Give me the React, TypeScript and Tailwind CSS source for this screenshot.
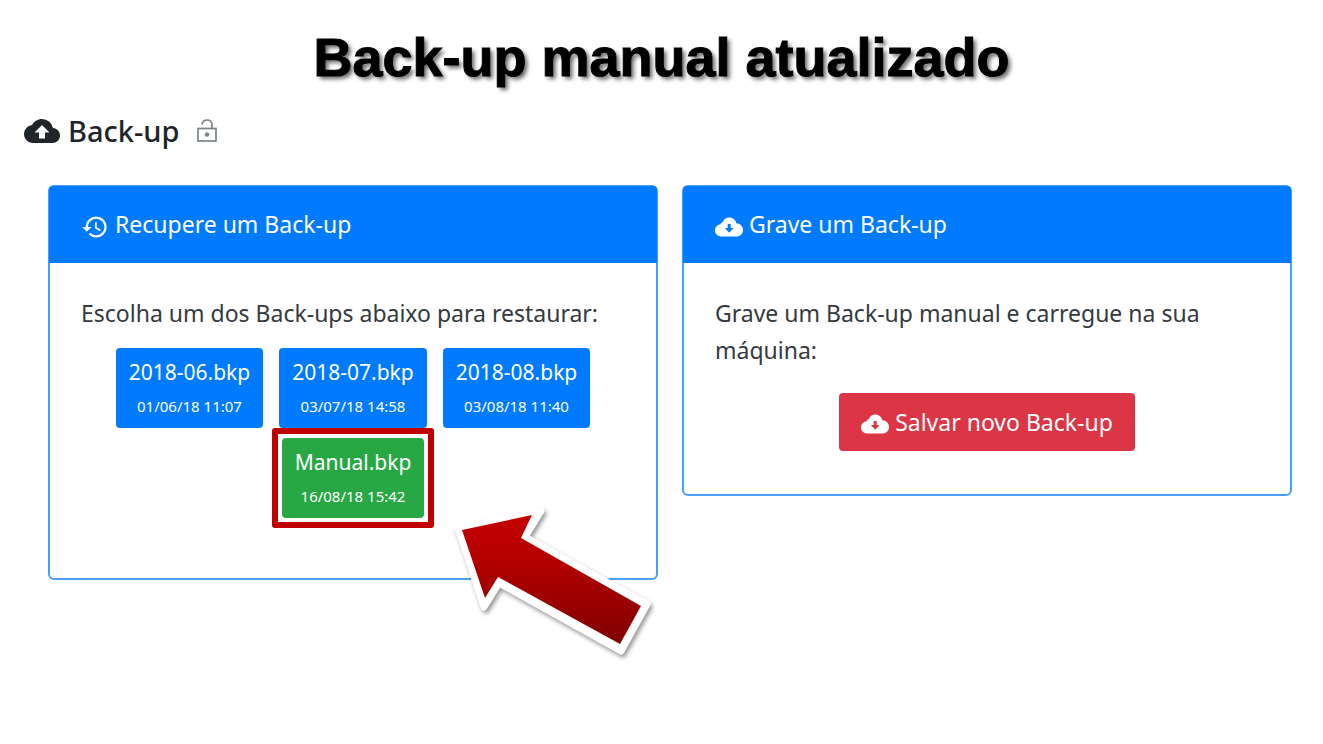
import { MdCloudUpload, MdHistory } from "react-icons/md";

function CloudDownload() {
  return (
    <svg viewBox="0 0 28 20" className="mt-1 h-5 w-7 shrink-0" fill="currentColor" fillRule="evenodd" aria-hidden="true">
      <path d="M8 5C8.600 2 11.200.500 14.300.500c3.700 0 6.500 2.500 6.900 5.800 3.900.200 6.800 3 6.800 6.600 0 3.800-2.900 6.600-6.500 6.600H6.500C2.900 19.500 0 17 0 13.500 0 10 2.500 7.600 5.500 7.200 5.800 6 6.800 5.200 8 5zM12.700 7v4H9.800l4.400 4.700L18.600 11h-2.900V7z" />
    </svg>
  );
}

function LockOpen() {
  return (
    <svg viewBox="0 0 20 24" className="h-6 w-5" fill="none" stroke="#7b848c" strokeWidth="1.700" aria-hidden="true">
      <rect x="1" y="9.500" width="18" height="12.500" />
      <path d="M5 5.500C5.500 2.500 7.500 1 10 1c3 0 5 2 5 5v3.500" />
      <circle cx="10" cy="15.500" r="2.200" fill="#7b848c" stroke="none" />
    </svg>
  );
}

const backups = [
  { name: "2018-06.bkp", date: "01/06/18 11:07" },
  { name: "2018-07.bkp", date: "03/07/18 14:58" },
  { name: "2018-08.bkp", date: "03/08/18 11:40" },
];

function BackupButton({ name, date, manual = false }: { name: string; date: string; manual?: boolean }) {
  return (
    <button
      type="button"
      className={`flex h-20 flex-col items-center rounded px-[13px] pt-2 text-white ${manual ? "bg-[#28a745]" : "bg-[#007bff]"}`}
    >
      <span className="text-[21px] leading-8">{name}</span>
      <span className="text-[15px] leading-9">{date}</span>
    </button>
  );
}

export default function App() {
  return (
    <main className="min-h-screen bg-white font-['Noto_Sans',sans-serif] text-[#212529]">
      <h1 className="pt-[27px] text-center font-['Arial_Rounded_MT_Bold','Liberation_Sans',sans-serif] text-[54px] font-bold leading-[60px] text-black [-webkit-text-stroke:1px_black] [text-shadow:3px_3px_4px_rgba(0,0,0,0.6)]">
        Back-up manual atualizado
      </h1>
      <div className="mt-6 flex h-10 items-center pl-6">
        <MdCloudUpload className="mr-2 size-9" />
        <h2 className="text-[29px] font-medium leading-10">Back-up</h2>
        <button type="button" aria-label="Desbloquear" className="ml-[18px]">
          <LockOpen />
        </button>
      </div>
      <div className="mt-[34px] grid grid-cols-2 items-start gap-6 pl-12 pr-[31px]">
        <section className="relative rounded-md border-2 border-[#4a9ff8] pb-[50px]">
          <h3 className="-mx-px -mt-px flex h-[77px] items-center gap-1.5 rounded-t bg-[#007bff] px-8 text-[23px] text-white">
            <MdHistory className="mt-1 size-7" />
            Recupere um Back-up
          </h3>
          <div className="px-[31px] pt-8 text-[#343a40]">
            <p className="text-[23px] leading-[37px]">Escolha um dos Back-ups abaixo para restaurar:</p>
            <div className="mt-4 flex flex-wrap justify-center gap-x-4">
              {backups.map((b) => (
                <BackupButton key={b.name} {...b} />
              ))}
            </div>
            <div className="flex justify-center">
              <div className="rounded-[3px] border-[6px] border-[#c00000] bg-white px-[4px] py-[4px]">
                <BackupButton name="Manual.bkp" date="16/08/18 15:42" manual />
              </div>
            </div>
          </div>
          <svg
            viewBox="450 500 210 165"
            className="absolute left-[400px] top-[313px] h-[165px] w-[210px] overflow-visible [filter:drop-shadow(2px_3px_2px_rgba(0,0,0,0.4))]"
            aria-hidden="true"
          >
            <defs>
              <linearGradient id="arrow" x1="0" y1="0" x2="0" y2="1">
                <stop offset="0" stopColor="#c40000" />
                <stop offset="0.300" stopColor="#b80000" />
                <stop offset="1" stopColor="#800000" />
              </linearGradient>
            </defs>
            <path d="M458 528L541 511L525 537L647 604L621 651L499 583L484 607Z" fill="white" stroke="white" strokeWidth="7" strokeLinejoin="round" />
            <path d="M462 530L532 515L521 538L641 606L620 644L498 577L485 598Z" fill="url(#arrow)" />
          </svg>
        </section>
        <section className="rounded-md border-2 border-[#4a9ff8] pb-[43px]">
          <h3 className="-mx-px -mt-px flex h-[77px] items-center gap-1.5 rounded-t bg-[#007bff] px-8 text-[23px] text-white">
            <CloudDownload />
            Grave um Back-up
          </h3>
          <div className="px-[31px] pt-8 text-[#343a40]">
            <p className="text-[23px] leading-[37px]">Grave um Back-up manual e carregue na sua máquina:</p>
            <div className="mt-6 flex justify-center">
              <button type="button" className="flex h-[58px] items-center gap-1.5 rounded bg-[#dc3545] px-[22px] text-[23px] text-white">
                <CloudDownload />
                Salvar novo Back-up
              </button>
            </div>
          </div>
        </section>
      </div>
    </main>
  );
}
